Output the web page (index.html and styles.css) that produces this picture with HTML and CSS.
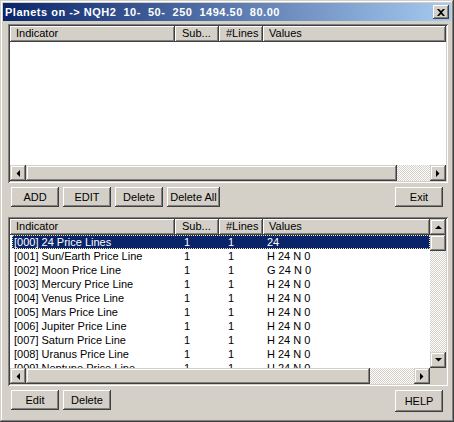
FILE: index.html
```html
<!DOCTYPE html>
<html>
<head>
<meta charset="utf-8">
<link rel="stylesheet" href="styles.css">
</head>
<body>
<div class="window">
  <div class="titlebar">
    <span class="title">Planets on -&gt; NQH2  10-  50-  250  1494.50  80.00</span>
    <span class="close"><svg width="8" height="7" viewBox="0 0 8 7"><path d="M0 0h2l2 2 2-2h2l-3 3.5 3 3.5h-2l-2-2-2 2h-2l3-3.5z" fill="#000"/></svg></span>
  </div>
  <div class="client">
    <div class="lv lv1">
      <div class="header">
        <div class="hcell h1">Indicator</div>
        <div class="hcell h2">Sub...</div>
        <div class="hcell h3">#Lines</div>
        <div class="hcell h4">Values</div>
      </div>
      <div class="empty"></div>
      <div class="hscroll">
        <div class="sbbtn"><svg width="4" height="7" viewBox="0 0 4 7"><path d="M4 0v7L0.5 3.5z" fill="#000"/></svg></div>
        <div class="thumb thumb1"></div>
        <div class="track"></div>
        <div class="sbbtn"><svg width="4" height="7" viewBox="0 0 4 7"><path d="M0 0v7l3.5-3.5z" fill="#000"/></svg></div>
      </div>
    </div>
    <div class="btnrow">
      <div class="btn w48">ADD</div>
      <div class="btn w48">EDIT</div>
      <div class="btn w48">Delete</div>
      <div class="btn w53">Delete All</div>
      <div class="btn w48 right">Exit</div>
    </div>
    <div class="lv lv2">
      <div class="main">
        <div class="header">
          <div class="hcell h1">Indicator</div>
          <div class="hcell h2">Sub...</div>
          <div class="hcell h3">#Lines</div>
          <div class="hcell h4">Values</div>
        </div>
        <div class="rows">
          <div class="row sel"><span class="c1">[000] 24 Price Lines</span><span class="c2">1</span><span class="c3">1</span><span class="c4">24</span></div>
          <div class="row"><span class="c1">[001] Sun/Earth Price Line</span><span class="c2">1</span><span class="c3">1</span><span class="c4">H 24 N 0</span></div>
          <div class="row"><span class="c1">[002] Moon Price Line</span><span class="c2">1</span><span class="c3">1</span><span class="c4">G 24 N 0</span></div>
          <div class="row"><span class="c1">[003] Mercury Price Line</span><span class="c2">1</span><span class="c3">1</span><span class="c4">H 24 N 0</span></div>
          <div class="row"><span class="c1">[004] Venus Price Line</span><span class="c2">1</span><span class="c3">1</span><span class="c4">H 24 N 0</span></div>
          <div class="row"><span class="c1">[005] Mars Price Line</span><span class="c2">1</span><span class="c3">1</span><span class="c4">H 24 N 0</span></div>
          <div class="row"><span class="c1">[006] Jupiter Price Line</span><span class="c2">1</span><span class="c3">1</span><span class="c4">H 24 N 0</span></div>
          <div class="row"><span class="c1">[007] Saturn Price Line</span><span class="c2">1</span><span class="c3">1</span><span class="c4">H 24 N 0</span></div>
          <div class="row"><span class="c1">[008] Uranus Price Line</span><span class="c2">1</span><span class="c3">1</span><span class="c4">H 24 N 0</span></div>
          <div class="row"><span class="c1">[009] Neptune Price Line</span><span class="c2">1</span><span class="c3">1</span><span class="c4">H 24 N 0</span></div>
        </div>
      </div>
      <div class="vscroll">
        <div class="sbbtn"><svg width="7" height="4" viewBox="0 0 7 4"><path d="M0 4h7L3.5 0.5z" fill="#000"/></svg></div>
        <div class="thumb vthumb"></div>
        <div class="track"></div>
        <div class="sbbtn"><svg width="7" height="4" viewBox="0 0 7 4"><path d="M0 0h7L3.5 3.5z" fill="#000"/></svg></div>
      </div>
      <div class="hscroll">
        <div class="sbbtn"><svg width="4" height="7" viewBox="0 0 4 7"><path d="M4 0v7L0.5 3.5z" fill="#000"/></svg></div>
        <div class="thumb thumb2"></div>
        <div class="track"></div>
        <div class="sbbtn"><svg width="4" height="7" viewBox="0 0 4 7"><path d="M0 0v7l3.5-3.5z" fill="#000"/></svg></div>
      </div>
      <div class="corner"></div>
    </div>
    <div class="btnrow">
      <div class="btn w48">Edit</div>
      <div class="btn w48">Delete</div>
      <div class="btn w48 right help">HELP</div>
    </div>
  </div>
</div>
</body>
</html>
```

FILE: styles.css
```css
* { box-sizing: border-box; }
html, body { margin: 0; padding: 0; }
body {
  width: 454px;
  height: 422px;
  overflow: hidden;
  background: #D4D0C8;
  font-family: "Liberation Sans", Arial, sans-serif;
  font-size: 11px;
  color: #000;
}
.window {
  width: 454px;
  height: 422px;
  padding: 3px;
  background: #D4D0C8;
  box-shadow: inset -1px -1px 0 #404040, inset 1px 1px 0 #D4D0C8, inset -2px -2px 0 #808080, inset 2px 2px 0 #fff;
  display: flex;
  flex-direction: column;
}
.titlebar {
  height: 18px;
  flex: none;
  background: linear-gradient(to right, #0A246A, #A6CAF0);
  display: flex;
  align-items: center;
  padding: 0 2px 0 2px;
  color: #fff;
  font-weight: bold;
}
.title {
  flex: 1;
  white-space: pre;
  letter-spacing: 0.5px;
  line-height: 18px;
}
.close {
  width: 16px;
  height: 14px;
  background: #D4D0C8;
  box-shadow: inset -1px -1px 0 #404040, inset 1px 1px 0 #fff, inset -2px -2px 0 #808080;
  display: flex;
  align-items: center;
  justify-content: center;
}
.client {
  flex: 1;
  padding: 3px 3px 0 5px;
  display: flex;
  flex-direction: column;
}
.lv {
  background: #fff;
  padding: 2px;
  box-shadow: inset 1px 1px 0 #808080, inset -1px -1px 0 #fff, inset 2px 2px 0 #404040, inset -2px -2px 0 #D4D0C8;
  flex: none;
}
.lv1 {
  height: 159px;
  display: grid;
  grid-template-rows: 16px 1fr 16px;
}
.lv2 {
  height: 169px;
  margin-top: 10px;
  display: grid;
  grid-template-columns: 1fr 16px;
  grid-template-rows: 1fr 16px;
}
.main { overflow: hidden; min-height: 0; }
.header {
  display: grid;
  grid-template-columns: 165px 44px 44px 1fr;
  height: 16px;
}
.hcell {
  background: #D4D0C8;
  box-shadow: inset -1px -1px 0 #404040, inset 1px 1px 0 #fff, inset -2px -2px 0 #808080;
  line-height: 15px;
  white-space: nowrap;
  overflow: hidden;
}
.h1 { padding-left: 6px; }
.h2 { padding-left: 7px; }
.h3 { padding-left: 7px; }
.h4 { padding-left: 6px; }
.rows { height: 133px; overflow: hidden; }
.row {
  display: grid;
  grid-template-columns: 163px 44px 44px 1fr;
  height: 14px;
  line-height: 14px;
  margin-left: 2px;
  white-space: nowrap;
}
.row.sel {
  background: #0A246A;
  color: #fff;
  outline: 1px dotted #ECEC9C;
  outline-offset: -1px;
}
.c1 { padding-left: 2px; }
.c2 { padding-left: 9px; }
.c3 { padding-left: 9px; }
.c4 { padding-left: 4px; }
.hscroll {
  display: flex;
  height: 16px;
}
.vscroll {
  display: flex;
  flex-direction: column;
  width: 16px;
}
.sbbtn {
  width: 16px;
  height: 16px;
  flex: none;
  background: #D4D0C8;
  box-shadow: inset -1px -1px 0 #404040, inset 1px 1px 0 #D4D0C8, inset -2px -2px 0 #808080, inset 2px 2px 0 #fff;
  display: flex;
  align-items: center;
  justify-content: center;
}
.thumb {
  flex: none;
  background: #D4D0C8;
  box-shadow: inset -1px -1px 0 #404040, inset 1px 1px 0 #D4D0C8, inset -2px -2px 0 #808080, inset 2px 2px 0 #fff;
}
.thumb1 { width: 371px; }
.thumb2 { width: 344px; }
.vthumb { height: 16px; }
.track {
  flex: 1;
  background: repeating-conic-gradient(#fff 0 25%, #D4D0C8 0 50%) 0 0 / 2px 2px;
}
.corner { background: #D4D0C8; }
.btnrow {
  display: flex;
  gap: 4px;
  margin-top: 4px;
  padding-left: 3px;
  height: 20px;
  flex: none;
}
.btn {
  height: 20px;
  background: #D4D0C8;
  box-shadow: inset -1px -1px 0 #404040, inset 1px 1px 0 #fff, inset -2px -2px 0 #808080;
  display: flex;
  align-items: center;
  justify-content: center;
  white-space: nowrap;
}
.w48 { width: 48px; }
.w53 { width: 53px; }
.right { margin-left: auto; margin-right: 5px; }
.help { height: 22px; }
```
